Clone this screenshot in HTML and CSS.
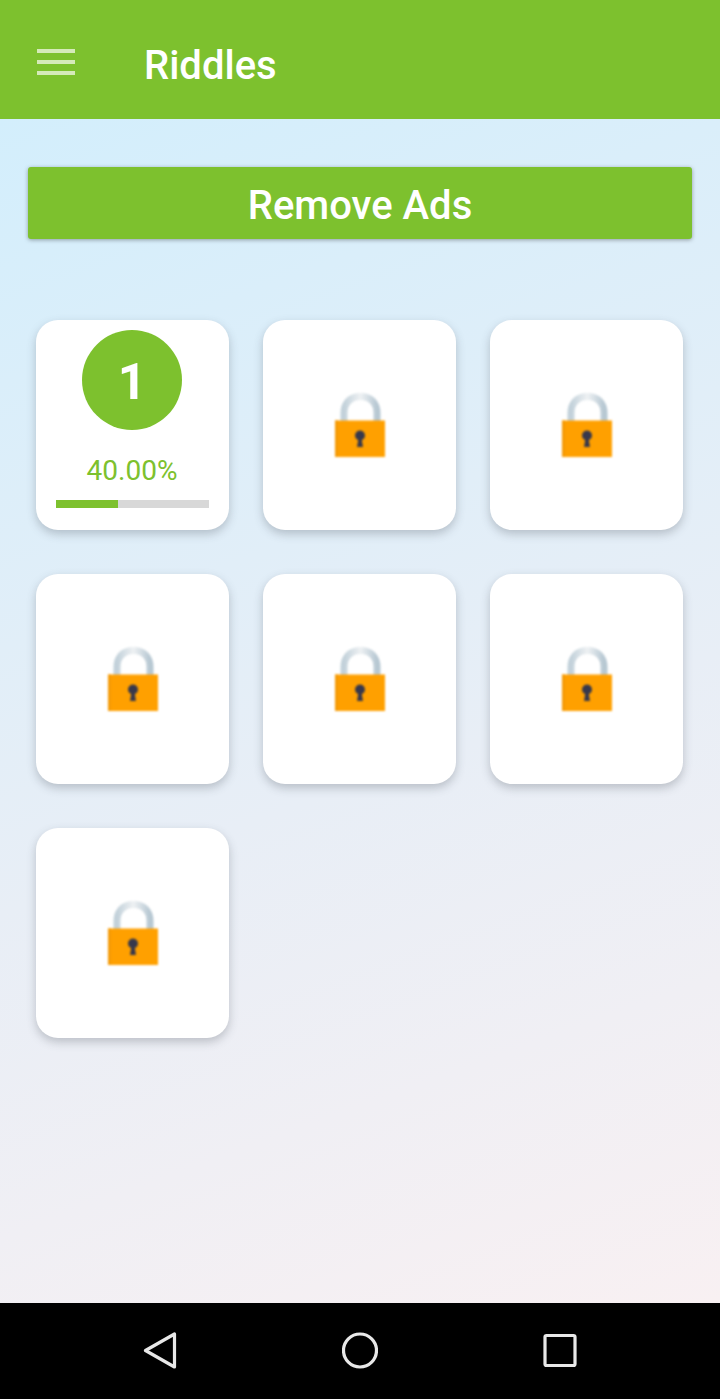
FILE: index.html
```html
<!DOCTYPE html>
<html lang="en">
<head>
    <meta charset="UTF-8">
    <meta name="viewport" content="width=device-width, initial-scale=1.0">
    <title>Riddles</title>
    <link rel="stylesheet" href="styles.css">
</head>
<body>
    <svg class="defs" width="0" height="0">
        <defs>
            <linearGradient id="shackle" x1="0" y1="0" x2="1" y2="0">
                <stop offset="0" stop-color="#c2d1da"/>
                <stop offset="0.5" stop-color="#eef1f3"/>
                <stop offset="1" stop-color="#b6c7d2"/>
            </linearGradient>
            <symbol id="lock" viewBox="0 0 52 64">
                <path d="M10 30V20C10 10 16.500 3.500 26.500 3.500C36.500 3.500 43 10 43 20V30" fill="none" stroke="url(#shackle)" stroke-width="7"/>
                <rect x="1" y="27.500" width="50" height="36.500" fill="#ffa000"/>
                <rect x="1" y="27.500" width="3" height="36.500" fill="#f59a06"/>
                <circle cx="26" cy="42.500" r="5" fill="#37384c"/>
                <path d="M24.500 45H27.500L29 54H23Z" fill="#37384c"/>
            </symbol>
        </defs>
    </svg>

    <div class="app">
        <header class="topbar">
            <div class="menu-icon">
                <span></span>
                <span></span>
                <span></span>
            </div>
            <h1>Riddles</h1>
        </header>

        <main class="content">
            <button class="remove-ads">Remove Ads</button>

            <div class="levels">
                <div class="card card-open">
                    <div class="level-num">1</div>
                    <div class="percent">40.00%</div>
                    <div class="progress"><div class="progress-fill" style="width: 40.5%"></div></div>
                </div>
                <div class="card"><svg class="lock"><use href="#lock"/></svg></div>
                <div class="card"><svg class="lock"><use href="#lock"/></svg></div>
                <div class="card"><svg class="lock"><use href="#lock"/></svg></div>
                <div class="card"><svg class="lock"><use href="#lock"/></svg></div>
                <div class="card"><svg class="lock"><use href="#lock"/></svg></div>
                <div class="card"><svg class="lock"><use href="#lock"/></svg></div>
            </div>
        </main>

        <nav class="navbar">
            <svg class="nav-icon" viewBox="0 0 36 40">
                <path d="M3.500 19.500L32.500 3V36Z" fill="none" stroke="#e8e8e8" stroke-width="3.200" stroke-linejoin="round"/>
            </svg>
            <svg class="nav-icon" viewBox="0 0 36 40">
                <circle cx="18" cy="19.500" r="16.500" fill="none" stroke="#e8e8e8" stroke-width="3.200"/>
            </svg>
            <svg class="nav-icon" viewBox="0 0 36 40">
                <rect x="3" y="4.500" width="30" height="30" rx="1.500" fill="none" stroke="#e8e8e8" stroke-width="3.200"/>
            </svg>
        </nav>
    </div>
</body>
</html>
```

FILE: styles.css
```css
body {
    margin: 0;
    font-family: Roboto, "Noto Sans", sans-serif;
}

.defs {
    position: absolute;
}

.app {
    display: flex;
    flex-direction: column;
    height: 1399px;
}

.topbar {
    display: flex;
    align-items: center;
    box-sizing: border-box;
    height: 119px;
    padding: 5px 0 0 37px;
    background-color: #7dc12e;
    color: #fff;
}

.topbar h1 {
    margin: 6px 0 0 69px;
    font-size: 40px;
    font-weight: 500;
}

.menu-icon {
    display: flex;
    flex-direction: column;
    gap: 7px;
    width: 38px;
}

.menu-icon span {
    height: 4px;
    background-color: #d5eab9;
}

.content {
    flex: 1;
    padding: 48px 28px 0;
    background: linear-gradient(160deg, #d3eefc 0%, #e8eef6 55%, #f8f0f2 100%);
}

.remove-ads {
    display: block;
    width: 100%;
    height: 72px;
    padding: 4px 0 0;
    border: none;
    border-radius: 3px;
    background-color: #7dc12e;
    color: #fff;
    font-family: inherit;
    font-size: 40px;
    font-weight: 500;
    box-shadow: 0 1px 4px rgba(0, 0, 0, 0.35);
}

.levels {
    display: grid;
    grid-template-columns: repeat(3, 193px);
    grid-auto-rows: 210px;
    column-gap: 34px;
    row-gap: 44px;
    margin-top: 81px;
    padding-left: 8px;
}

.card {
    display: flex;
    align-items: center;
    justify-content: center;
    border-radius: 22px;
    background-color: #fff;
    box-shadow: 0 4px 10px rgba(60, 70, 80, 0.28);
}

.card-open {
    flex-direction: column;
    justify-content: flex-start;
    padding-top: 10px;
    box-sizing: border-box;
}

.lock {
    width: 52px;
    height: 64px;
    filter: blur(0.9px);
}

.level-num {
    width: 100px;
    height: 100px;
    margin-right: 1px;
    border-radius: 50%;
    background-color: #7dc12e;
    color: #fff;
    font-size: 50px;
    font-weight: 700;
    line-height: 104px;
    text-align: center;
}

.percent {
    margin: 24px 1px 0 0;
    color: #7dc12e;
    font-size: 28px;
    line-height: 33px;
}

.progress {
    width: 153px;
    height: 8px;
    margin-top: 13px;
    background-color: #d8d8d8;
}

.progress-fill {
    height: 100%;
    background-color: #7dc12e;
}

.navbar {
    display: flex;
    justify-content: center;
    gap: 164px;
    align-items: center;
    height: 96px;
    background-color: #000;
}

.nav-icon {
    width: 36px;
    height: 40px;
    filter: blur(0.3px);
}
```
